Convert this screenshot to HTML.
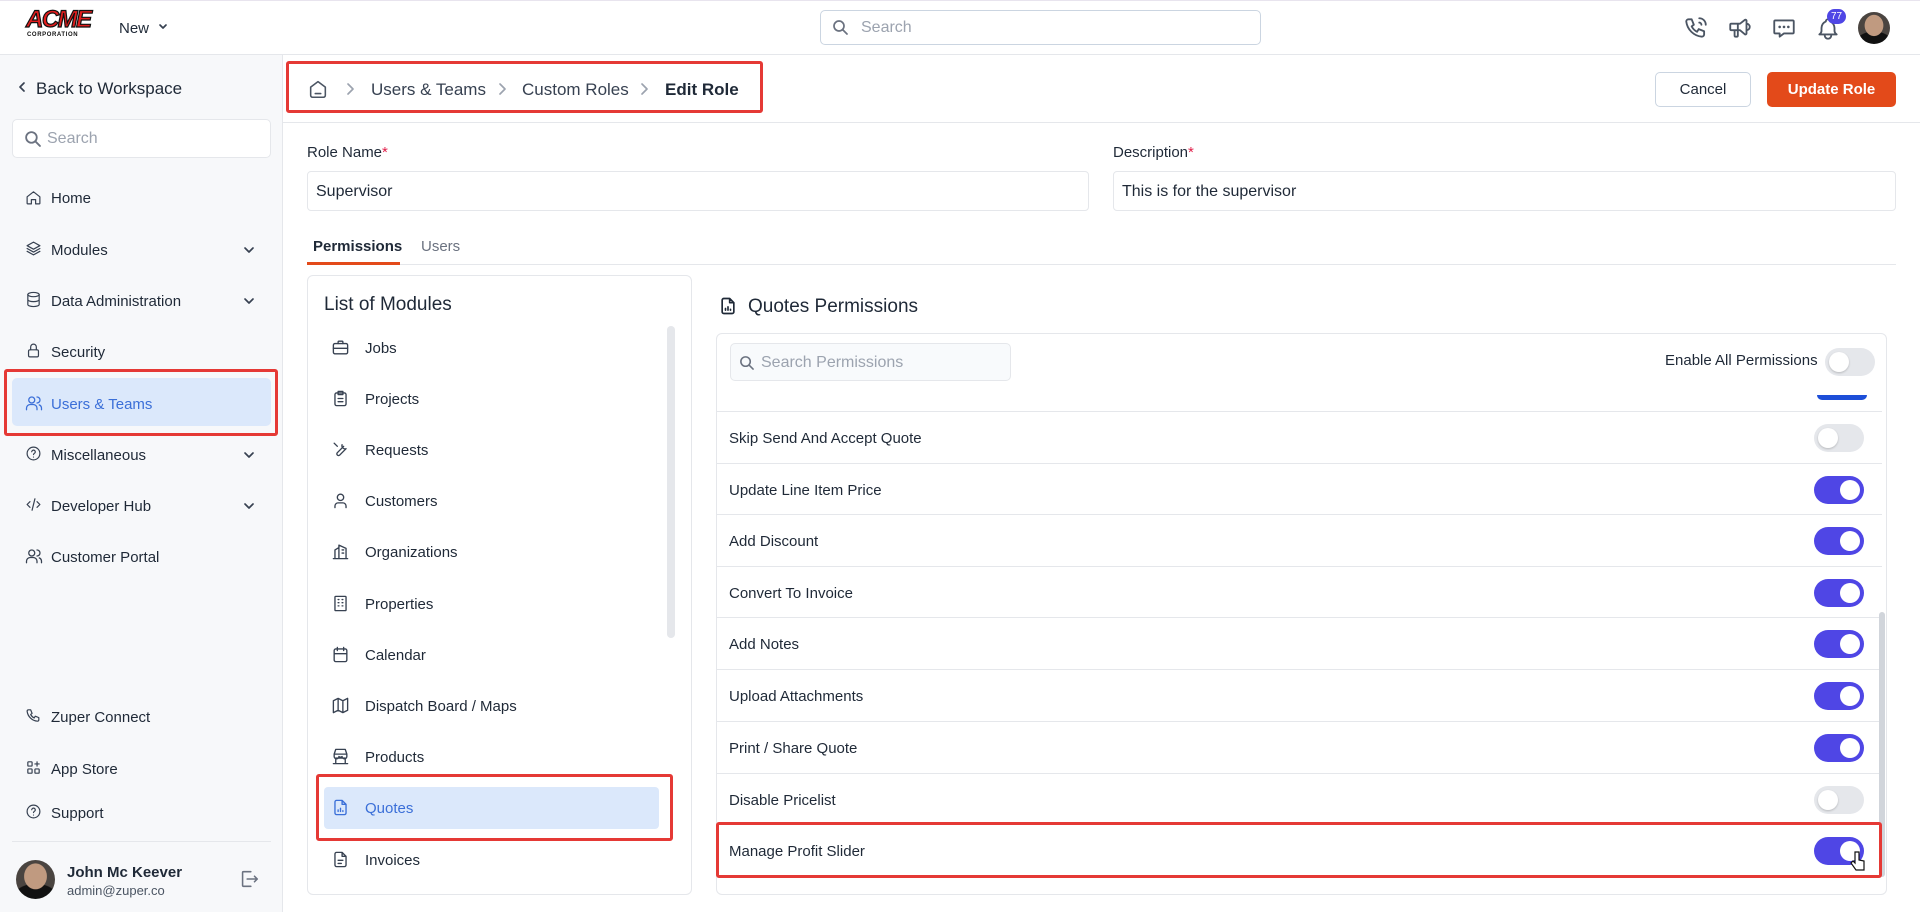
<!DOCTYPE html>
<html><head><meta charset="utf-8"><style>
*{box-sizing:border-box;margin:0;padding:0}
body{width:1920px;height:912px;overflow:hidden;font-family:"Liberation Sans",sans-serif;color:#1f2937;background:#fff;position:relative}
.abs{position:absolute}
.ico{position:absolute;stroke:#374151;fill:none;stroke-width:1.7;stroke-linecap:round;stroke-linejoin:round}
.side{left:0;top:55px;width:283px;height:857px;background:#f7f8fa;border-right:1px solid #e5e7eb}
.nav{position:absolute;left:51px;font-size:15px;color:#1f2937;margin-top:2px}
.chev{position:absolute;left:242px}
.mod{position:absolute;left:365px;font-size:15px;color:#1f2937;margin-top:1px}
.row{position:absolute;left:717px;width:1165px;height:52px;border-top:1px solid #e5e7eb;font-size:15px;padding-left:12px;line-height:54px}
.tg{position:absolute;right:18px;top:12px;width:50px;height:28px;border-radius:14px;background:#4f46e5}
.tg::after{content:"";position:absolute;right:4px;top:4px;width:20px;height:20px;border-radius:50%;background:#fff}
.tg.off{background:#e5e7eb}
.tg.off::after{left:4px;right:auto;box-shadow:0 1px 2px rgba(0,0,0,.2)}
.red{position:absolute;border:3px solid #e53935;border-radius:3px}
.av{background:radial-gradient(ellipse 30% 34% at 50% 42%,#c09a80 0 95%,transparent 100%),radial-gradient(ellipse 60% 40% at 50% 100%,#111 0 95%,transparent 100%),#4a4440}
</style></head><body>
<div class="abs" style="left:0;top:0;width:1920px;height:55px;border-bottom:1px solid #e5e7eb;border-top:1px solid #e8e4ee"></div>
<div class="abs" style="left:26px;top:9px;font:900 italic 24px 'Liberation Sans';color:#e11d1d;letter-spacing:-1.5px;line-height:22px;-webkit-text-stroke:1.2px #111">ACME</div>
<div class="abs" style="left:27px;top:32px;font:bold 6px 'Liberation Sans';color:#111;letter-spacing:.6px">CORPORATION</div>
<div class="abs" style="left:119px;top:20px;font-size:15px">New</div>
<svg class="ico" style="left:158px;top:22px" width="10" height="10" viewBox="0 0 10 10"><path d="M2 3l3 3 3-3"/></svg>
<div class="abs" style="left:820px;top:10px;width:441px;height:35px;border:1px solid #cbd5e1;border-radius:5px"></div>
<svg class="ico" style="left:832px;top:19px;stroke:#6b7280" width="16" height="16" viewBox="0 0 16 16"><circle cx="7" cy="7" r="5"/><path d="M11 11l4 4"/></svg>
<div class="abs" style="left:861px;top:19px;font-size:16px;color:#9ca3af">Search</div>
<svg class="ico" style="left:1683px;top:15px;stroke:#4b5563" width="26" height="26" viewBox="0 0 24 24"><path d="M5 4h3l2 5-2 1.5a11 11 0 0 0 5 5L14.5 13l5 2v3a2 2 0 0 1-2 2A16 16 0 0 1 3 6a2 2 0 0 1 2-2M15 3a6 6 0 0 1 6 6M15 7a2 2 0 0 1 2 2"/></svg>
<svg class="ico" style="left:1727px;top:15px;stroke:#4b5563" width="26" height="26" viewBox="0 0 24 24"><path d="M18 8a3 3 0 0 1 0 6M10 8v11a1 1 0 0 1-1 1H8a1 1 0 0 1-1-1v-5M12 8l4.5-3.5A1 1 0 0 1 18 5v12a1 1 0 0 1-1.5.8L12 14H4a1 1 0 0 1-1-1V9a1 1 0 0 1 1-1h8"/></svg>
<svg class="ico" style="left:1771px;top:15px;stroke:#4b5563" width="26" height="26" viewBox="0 0 24 24"><path d="M4 5h16a1 1 0 0 1 1 1v10a1 1 0 0 1-1 1h-8l-4 3v-3H4a1 1 0 0 1-1-1V6a1 1 0 0 1 1-1z"/><path d="M8 11h.01M12 11h.01M16 11h.01" stroke-width="2.4"/></svg>
<svg class="ico" style="left:1815px;top:16px;stroke:#4b5563" width="26" height="26" viewBox="0 0 24 24"><path d="M10 5a2 2 0 1 1 4 0a7 7 0 0 1 4 6v3a4 4 0 0 0 2 3H4a4 4 0 0 0 2-3v-3a7 7 0 0 1 4-6M9 17v1a3 3 0 0 0 6 0v-1"/></svg>
<div class="abs" style="left:1827px;top:9px;width:19px;height:15px;border-radius:8px;background:#4f46e5;color:#fff;font-size:10px;text-align:center;line-height:15px">77</div>
<div class="abs av" style="left:1858px;top:12px;width:32px;height:32px;border-radius:50%"></div>
<div class="abs side"></div>
<svg class="ico" style="left:16px;top:81px" width="12" height="12" viewBox="0 0 12 12"><path d="M8 2L4 6l4 4"/></svg>
<div class="abs" style="left:36px;top:79px;font-size:17px">Back to Workspace</div>
<div class="abs" style="left:12px;top:119px;width:259px;height:39px;background:#fff;border:1px solid #e5e7eb;border-radius:5px"></div>
<svg class="ico" style="left:24px;top:130px;stroke:#6b7280" width="17" height="17" viewBox="0 0 16 16"><circle cx="7" cy="7" r="5"/><path d="M11 11l4 4"/></svg>
<div class="abs" style="left:47px;top:130px;font-size:16px;color:#9ca3af">Search</div>
<div class="abs" style="left:12px;top:378px;width:259px;height:48px;background:#dbe8fb;border-radius:5px"></div>
<div class="red" style="left:4px;top:369px;width:274px;height:67px"></div>
<svg class="ico" style="left:25px;top:189px" width="17" height="17" viewBox="0 0 24 24"><path d="M3 11l9-7 9 7v9a1 1 0 0 1-1 1h-5v-6H9v6H4a1 1 0 0 1-1-1z"/></svg><div class="nav" style="top:188px">Home</div>
<svg class="ico" style="left:25px;top:240px" width="17" height="17" viewBox="0 0 24 24"><path d="M12 3l9 5-9 5-9-5zM3 12l9 5 9-5M3 16l9 5 9-5"/></svg><div class="nav" style="top:240px">Modules</div>
<svg class="ico chev" style="top:243px" width="14" height="14" viewBox="0 0 14 14"><path d="M3 5l4 4 4-4"/></svg>
<svg class="ico" style="left:25px;top:291px" width="17" height="17" viewBox="0 0 24 24"><ellipse cx="12" cy="5" rx="8" ry="3"/><path d="M4 5v14c0 1.7 3.6 3 8 3s8-1.3 8-3V5M4 12c0 1.7 3.6 3 8 3s8-1.3 8-3"/></svg><div class="nav" style="top:291px">Data Administration</div>
<svg class="ico chev" style="top:294px" width="14" height="14" viewBox="0 0 14 14"><path d="M3 5l4 4 4-4"/></svg>
<svg class="ico" style="left:25px;top:342px" width="17" height="17" viewBox="0 0 24 24"><rect x="5" y="11" width="14" height="10" rx="2"/><path d="M8 11V7a4 4 0 0 1 8 0v4"/></svg><div class="nav" style="top:342px">Security</div>
<svg class="ico" style="left:25px;top:394px;stroke:#3b6fd8" width="18" height="18" viewBox="0 0 24 24"><circle cx="9" cy="8" r="4"/><path d="M2 21v-2a5 5 0 0 1 5-5h4a5 5 0 0 1 5 5v2M16 4a4 4 0 0 1 0 8M22 21v-2a5 5 0 0 0-3-4.5"/></svg><div class="nav" style="top:394px;color:#3b6fd8">Users &amp; Teams</div>
<svg class="ico" style="left:25px;top:445px" width="17" height="17" viewBox="0 0 24 24"><circle cx="12" cy="12" r="9"/><path d="M9.5 9.5a2.5 2.5 0 0 1 5 .5c0 1.5-2.5 2-2.5 3.5M12 17h.01"/></svg><div class="nav" style="top:445px">Miscellaneous</div>
<svg class="ico chev" style="top:448px" width="14" height="14" viewBox="0 0 14 14"><path d="M3 5l4 4 4-4"/></svg>
<svg class="ico" style="left:25px;top:496px" width="17" height="17" viewBox="0 0 24 24"><path d="M7 8l-4 4 4 4M17 8l4 4-4 4M14 4l-4 16"/></svg><div class="nav" style="top:496px">Developer Hub</div>
<svg class="ico chev" style="top:499px" width="14" height="14" viewBox="0 0 14 14"><path d="M3 5l4 4 4-4"/></svg>
<svg class="ico" style="left:25px;top:547px" width="18" height="18" viewBox="0 0 24 24"><circle cx="9" cy="8" r="4"/><path d="M2 21v-2a5 5 0 0 1 5-5h4a5 5 0 0 1 5 5v2M16 4a4 4 0 0 1 0 8M22 21v-2a5 5 0 0 0-3-4.5"/></svg><div class="nav" style="top:547px">Customer Portal</div>
<svg class="ico" style="left:25px;top:707px" width="17" height="17" viewBox="0 0 24 24"><path d="M5 4h3l2 5-2 1.5a11 11 0 0 0 5 5L14.5 13l5 2v3a2 2 0 0 1-2 2A16 16 0 0 1 3 6a2 2 0 0 1 2-2"/></svg><div class="nav" style="top:707px">Zuper Connect</div>
<svg class="ico" style="left:25px;top:759px" width="17" height="17" viewBox="0 0 24 24"><rect x="4" y="4" width="6" height="6" rx="1"/><rect x="4" y="14" width="6" height="6" rx="1"/><rect x="14" y="14" width="6" height="6" rx="1"/><path d="M14 7h6M17 4v6"/></svg><div class="nav" style="top:759px">App Store</div>
<svg class="ico" style="left:25px;top:803px" width="17" height="17" viewBox="0 0 24 24"><circle cx="12" cy="12" r="9"/><path d="M9.5 9.5a2.5 2.5 0 0 1 5 .5c0 1.5-2.5 2-2.5 3.5M12 17h.01"/></svg><div class="nav" style="top:803px">Support</div>
<div class="abs" style="left:12px;top:841px;width:259px;height:1px;background:#e5e7eb"></div>
<div class="abs av" style="left:16px;top:860px;width:39px;height:39px;border-radius:50%"></div>
<div class="abs" style="left:67px;top:864px;font-size:15px;font-weight:bold">John Mc Keever</div>
<div class="abs" style="left:67px;top:883px;font-size:13px;color:#4b5563">admin@zuper.co</div>
<svg class="ico" style="left:238px;top:868px;stroke:#6b7280" width="22" height="22" viewBox="0 0 24 24"><path d="M14 4H6a1 1 0 0 0-1 1v14a1 1 0 0 0 1 1h8M10 12h11M18 9l3 3-3 3"/></svg>
<div class="abs" style="left:283px;top:122px;width:1637px;height:1px;background:#e5e7eb"></div>
<div class="red" style="left:286px;top:61px;width:477px;height:52px"></div>
<svg class="ico" style="left:307px;top:78px;stroke:#4b5563" width="22" height="22" viewBox="0 0 24 24"><path d="M4 10l8-6 8 6v9a2 2 0 0 1-2 2H6a2 2 0 0 1-2-2zM9 17h6"/></svg>
<svg class="ico" style="left:344px;top:82px;stroke:#9ca3af" width="12" height="14" viewBox="0 0 12 14"><path d="M4 2l5 5-5 5"/></svg>
<div class="abs" style="left:371px;top:80px;font-size:17px;color:#374151">Users &amp; Teams</div>
<svg class="ico" style="left:496px;top:82px;stroke:#9ca3af" width="12" height="14" viewBox="0 0 12 14"><path d="M4 2l5 5-5 5"/></svg>
<div class="abs" style="left:522px;top:80px;font-size:17px;color:#374151">Custom Roles</div>
<svg class="ico" style="left:638px;top:82px;stroke:#9ca3af" width="12" height="14" viewBox="0 0 12 14"><path d="M4 2l5 5-5 5"/></svg>
<div class="abs" style="left:665px;top:80px;font-size:17px;font-weight:bold;color:#1f2937">Edit Role</div>
<div class="abs" style="left:1655px;top:72px;width:96px;height:35px;border:1px solid #cbd5e1;border-radius:5px;text-align:center;line-height:34px;font-size:15px">Cancel</div>
<div class="abs" style="left:1767px;top:72px;width:129px;height:35px;background:#e34a1a;border-radius:5px;text-align:center;line-height:36px;font-size:15px;color:#fff;font-weight:bold">Update Role</div>
<div class="abs" style="left:307px;top:144px;font-size:15px">Role Name<span style="color:#e11d48">*</span></div>
<div class="abs" style="left:1113px;top:144px;font-size:15px">Description<span style="color:#e11d48">*</span></div>
<div class="abs" style="left:307px;top:171px;width:782px;height:40px;border:1px solid #e5e7eb;border-radius:4px;padding:0 8px;line-height:40px;font-size:16px">Supervisor</div>
<div class="abs" style="left:1113px;top:171px;width:783px;height:40px;border:1px solid #e5e7eb;border-radius:4px;padding:0 8px;line-height:40px;font-size:16px">This is for the supervisor</div>
<div class="abs" style="left:307px;top:264px;width:1589px;height:1px;background:#e5e7eb"></div>
<div class="abs" style="left:307px;top:262px;width:93px;height:3px;background:#e34a1a"></div>
<div class="abs" style="left:313px;top:238px;font-size:15px;font-weight:bold">Permissions</div>
<div class="abs" style="left:421px;top:238px;font-size:15px;color:#6b7280">Users</div>
<div class="abs" style="left:307px;top:275px;width:385px;height:620px;border:1px solid #e5e7eb;border-radius:6px"></div>
<div class="abs" style="left:324px;top:294px;font-size:19px;color:#1f2937">List of Modules</div>
<div class="abs" style="left:667px;top:326px;width:8px;height:312px;background:#e5e7eb;border-radius:4px"></div>
<div class="abs" style="left:324px;top:787px;width:335px;height:42px;background:#dbe8fb;border-radius:4px"></div>
<div class="red" style="left:316px;top:774px;width:357px;height:67px"></div>
<svg class="ico" style="left:331px;top:338px" width="19" height="19" viewBox="0 0 24 24"><rect x="3" y="7" width="18" height="13" rx="2"/><path d="M9 7V5a1 1 0 0 1 1-1h4a1 1 0 0 1 1 1v2M3 13h18"/></svg><div class="mod" style="top:339px">Jobs</div>
<svg class="ico" style="left:331px;top:389px" width="19" height="19" viewBox="0 0 24 24"><rect x="5" y="5" width="14" height="16" rx="2"/><path d="M9 3h6v4H9zM9 12h6M9 16h6"/></svg><div class="mod" style="top:390px">Projects</div>
<svg class="ico" style="left:331px;top:440px" width="19" height="19" viewBox="0 0 24 24"><path d="M14 6a4 4 0 0 0 5 5l-8 8a2 2 0 0 1-3-3l8-8M4 4l4 4"/></svg><div class="mod" style="top:441px">Requests</div>
<svg class="ico" style="left:331px;top:491px" width="19" height="19" viewBox="0 0 24 24"><circle cx="12" cy="8" r="4"/><path d="M5 21v-2a4 4 0 0 1 4-4h6a4 4 0 0 1 4 4v2"/></svg><div class="mod" style="top:492px">Customers</div>
<svg class="ico" style="left:331px;top:542px" width="19" height="19" viewBox="0 0 24 24"><path d="M3 21h18M5 21V10l5-3v14M10 21V4l9 4v13M14 10h2M14 14h2"/></svg><div class="mod" style="top:543px">Organizations</div>
<svg class="ico" style="left:331px;top:594px" width="19" height="19" viewBox="0 0 24 24"><rect x="5" y="3" width="14" height="18" rx="1"/><path d="M9 7h1M14 7h1M9 11h1M14 11h1M9 15h1M14 15h1"/></svg><div class="mod" style="top:595px">Properties</div>
<svg class="ico" style="left:331px;top:645px" width="19" height="19" viewBox="0 0 24 24"><rect x="4" y="5" width="16" height="16" rx="2"/><path d="M8 3v4M16 3v4M4 11h16"/></svg><div class="mod" style="top:646px">Calendar</div>
<svg class="ico" style="left:331px;top:696px" width="19" height="19" viewBox="0 0 24 24"><path d="M3 6l6-3 6 3 6-3v15l-6 3-6-3-6 3zM9 3v15M15 6v15"/></svg><div class="mod" style="top:697px">Dispatch Board / Maps</div>
<svg class="ico" style="left:331px;top:747px" width="19" height="19" viewBox="0 0 24 24"><path d="M3 21h18M4 9l2-6h12l2 6M4 9h16v3a3 3 0 0 1-6 0 3 3 0 0 1-4 0 3 3 0 0 1-6 0zM6 21v-7h12v7"/></svg><div class="mod" style="top:748px">Products</div>
<svg class="ico" style="left:331px;top:798px;stroke:#3b6fd8" width="19" height="19" viewBox="0 0 24 24"><path d="M14 3H7a2 2 0 0 0-2 2v14a2 2 0 0 0 2 2h10a2 2 0 0 0 2-2V8zM14 3v5h5M9 17v-2M12 17v-4M15 17v-1"/></svg><div class="mod" style="top:799px;color:#3b6fd8">Quotes</div>
<svg class="ico" style="left:331px;top:850px" width="19" height="19" viewBox="0 0 24 24"><path d="M14 3H7a2 2 0 0 0-2 2v14a2 2 0 0 0 2 2h10a2 2 0 0 0 2-2V8zM14 3v5h5M9 13h6M9 17h4"/></svg><div class="mod" style="top:851px">Invoices</div>
<svg class="ico" style="left:718px;top:295px;stroke:#1f2937;stroke-width:2" width="20" height="22" viewBox="0 0 24 24"><path d="M14 3H7a2 2 0 0 0-2 2v14a2 2 0 0 0 2 2h10a2 2 0 0 0 2-2V8zM14 3v5h5M9 17v-2M12 17v-4M15 17v-1"/></svg>
<div class="abs" style="left:748px;top:296px;font-size:19px">Quotes Permissions</div>
<div class="abs" style="left:716px;top:333px;width:1171px;height:562px;border:1px solid #e5e7eb;border-radius:6px"></div>
<div class="abs" style="left:730px;top:343px;width:281px;height:38px;border:1px solid #e5e7eb;border-radius:5px;background:#f8fafc"></div>
<svg class="ico" style="left:739px;top:355px;stroke:#6b7280" width="15" height="15" viewBox="0 0 16 16"><circle cx="7" cy="7" r="5"/><path d="M11 11l4 4"/></svg>
<div class="abs" style="left:761px;top:354px;font-size:16px;color:#9ca3af">Search Permissions</div>
<div class="abs" style="left:1665px;top:352px;font-size:15px;color:#1f2937">Enable All Permissions</div>
<div class="tg off" style="left:1825px;top:348px;right:auto"></div>
<div class="abs" style="left:1817px;top:395px;width:50px;height:5px;background:#1d4ed8;border-radius:0 0 6px 6px"></div>
<div class="row" style="top:411px">Skip Send And Accept Quote<div class="tg off"></div></div>
<div class="row" style="top:463px">Update Line Item Price<div class="tg"></div></div>
<div class="row" style="top:514px">Add Discount<div class="tg"></div></div>
<div class="row" style="top:566px">Convert To Invoice<div class="tg"></div></div>
<div class="row" style="top:617px">Add Notes<div class="tg"></div></div>
<div class="row" style="top:669px">Upload Attachments<div class="tg"></div></div>
<div class="row" style="top:721px">Print / Share Quote<div class="tg"></div></div>
<div class="row" style="top:773px">Disable Pricelist<div class="tg off"></div></div>
<div class="row" style="top:824px;border-bottom:1px solid #e5e7eb">Manage Profit Slider<div class="tg"></div></div>
<div class="abs" style="left:1879px;top:612px;width:6px;height:265px;background:#d1d5db;border-radius:3px"></div>
<div class="red" style="left:716px;top:822px;width:1166px;height:56px"></div>
<svg class="abs" style="left:1850px;top:850px" width="16" height="22" viewBox="0 0 16 22"><path d="M5 2v11l-2-2-2 2 5 7h8V11l-5-1V2z" fill="#fff" stroke="#111" stroke-width="1.2"/></svg>
</body></html>
